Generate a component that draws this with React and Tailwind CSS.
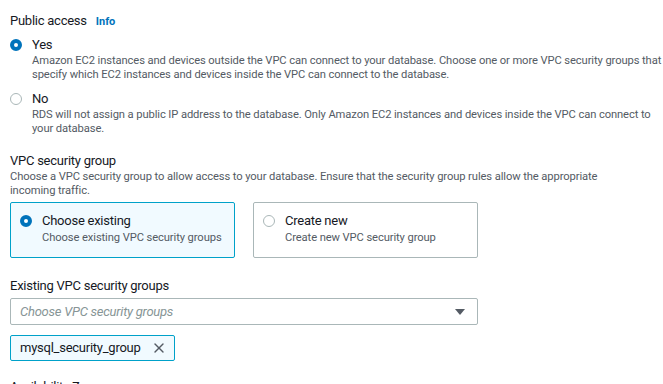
import { X } from 'lucide-react';

function Radio({ checked }) {
  return checked ? (
    <span className="w-3 h-3 rounded-full border-[4px] border-[#0073bb] bg-white shrink-0" />
  ) : (
    <span className="w-3 h-3 rounded-full border border-[#aab7b8] bg-white shrink-0" />
  );
}

function Desc({ lines, className = '' }) {
  return (
    <div className={'text-[11.2px] leading-[14px] tracking-[-0.1px] text-[#545b64] whitespace-nowrap ' + className}>
      {lines.map((l) => (
        <div key={l}>{l}</div>
      ))}
    </div>
  );
}

function RadioOption({ checked, label, lines }) {
  return (
    <div>
      <div className="flex items-center gap-[10px] h-[18px] text-[13px] tracking-[-0.25px] text-[#16191f]">
        <Radio checked={checked} />
        <span>{label}</span>
      </div>
      <Desc lines={lines} className="pl-[22px]" />
    </div>
  );
}

function Tile({ checked, label, sub }) {
  return (
    <div
      className={
        checked
          ? 'h-[56px] rounded-[2px] border border-[#00a1c9] bg-[#f1faff] pl-[9px] pt-[9px]'
          : 'h-[56px] rounded-[2px] border border-[#aab7b8] bg-white pl-[9px] pt-[9px]'
      }
    >
      <div className="flex items-center gap-[10px] h-[18px] text-[13px] tracking-[-0.25px] leading-[18px] text-[#16191f]">
        <Radio checked={checked} />
        <span>{label}</span>
      </div>
      <div className="pl-[22px] text-[11.2px] leading-[16px] tracking-[-0.1px] text-[#545b64] whitespace-nowrap">{sub}</div>
    </div>
  );
}

export default function App() {
  return (
    <div className="w-[663px] h-[384px] overflow-hidden bg-white pl-[10px] pt-[11px] font-['Roboto',sans-serif]">
      <div className="flex items-baseline gap-[9px] h-[20px] leading-[20px]">
        <span className="text-[13px] tracking-[-0.25px] text-[#16191f]">Public access</span>
        <span className="text-[11px] font-bold text-[#0073bb]">Info</span>
      </div>

      <div className="mt-[5px]">
        <RadioOption
          checked
          label="Yes"
          lines={[
            'Amazon EC2 instances and devices outside the VPC can connect to your database. Choose one or more VPC security groups that',
            'specify which EC2 instances and devices inside the VPC can connect to the database.',
          ]}
        />
      </div>

      <div className="mt-[8px]">
        <RadioOption
          label="No"
          lines={[
            'RDS will not assign a public IP address to the database. Only Amazon EC2 instances and devices inside the VPC can connect to',
            'your database.',
          ]}
        />
      </div>

      <div className="mt-[16px] text-[13px] tracking-[-0.25px] leading-[18px] text-[#16191f]">VPC security group</div>
      <Desc
        lines={[
          'Choose a VPC security group to allow access to your database. Ensure that the security group rules allow the appropriate',
          'incoming traffic.',
        ]}
      />

      <div className="mt-[4px] grid grid-cols-2 gap-[18px] w-[468px]">
        <Tile checked label="Choose existing" sub="Choose existing VPC security groups" />
        <Tile label="Create new" sub="Create new VPC security group" />
      </div>

      <div className="mt-[19px] text-[13px] tracking-[-0.25px] leading-[18px] text-[#16191f]">Existing VPC security groups</div>

      <div className="mt-[3px] w-[468px] h-[27px] rounded-[2px] border border-[#aab7b8] flex items-center justify-between pl-[9px] pr-[11px]">
        <span className="text-[13px] tracking-[-0.25px] italic text-[#879596]">Choose VPC security groups</span>
        <svg width="12" height="8" viewBox="0 0 12 8">
          <path d="M1 1h10L6 7z" fill="#545b64" />
        </svg>
      </div>

      <div className="mt-[10px] inline-flex items-center gap-[10px] h-[26px] rounded-[2px] border border-[#00a1c9] bg-[#f1faff] pl-[9px] pr-[7px]">
        <span className="text-[13px] tracking-[-0.25px] text-[#16191f]">mysql_security_group</span>
        <X className="w-4 h-4 text-[#545b64]" strokeWidth={2} />
      </div>

      <div className="mt-[17px] text-[13px] tracking-[-0.25px] leading-[18px] text-[#16191f]">Availability Zone</div>
    </div>
  );
}
